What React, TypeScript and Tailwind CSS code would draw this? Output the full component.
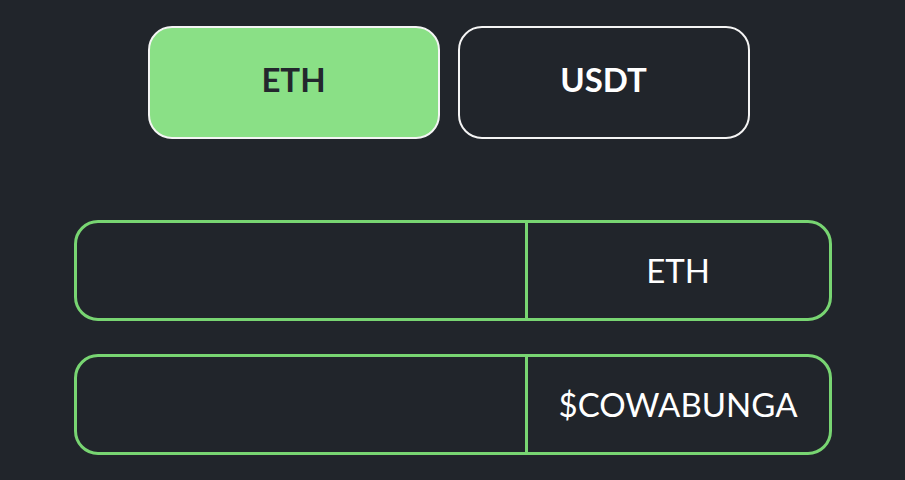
import React from "react";

export default function App() {
  return (
    <div className="w-[905px] h-[480px] bg-[#21252b] flex flex-col items-center pt-[26px] overflow-hidden" style={{ fontFamily: "Lato, 'Noto Sans', sans-serif" }}>
      <div className="flex gap-[18px] ml-[-8px]">
        <button className="w-[292px] h-[113px] rounded-[24px] border-[2.5px] border-[#f4f4f4] bg-[#8ae086] text-[#23272d] font-bold text-[33px] flex items-center justify-center pb-[5px]">
          ETH
        </button>
        <button className="w-[292px] h-[113px] rounded-[24px] border-[2.5px] border-[#f4f4f4] bg-transparent text-white font-bold text-[33px] flex items-center justify-center pb-[5px]">
          USDT
        </button>
      </div>
      <div className="flex flex-col gap-[33px] mt-[81px]">
        {["ETH", "$COWABUNGA"].map((t) => (
          <div key={t} className="w-[758px] h-[101px] rounded-[24px] border-[3px] border-[#78d572] flex">
            <input className="w-[451px] h-full bg-transparent outline-none border-r-[3px] border-[#78d572] text-white px-4 text-[28px]" />
            <div className="flex-1 flex items-center justify-center text-white text-[33px]">{t}</div>
          </div>
        ))}
      </div>
    </div>
  );
}
